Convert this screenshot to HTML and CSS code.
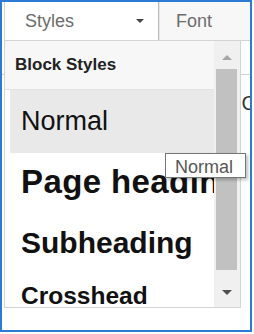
FILE: index.html
```html
<!DOCTYPE html>
<html lang="en">
<head>
  <meta charset="UTF-8">
  <meta name="viewport" content="width=device-width, initial-scale=1.0">
  <title>Styles</title>
  <link rel="stylesheet" href="styles.css">
</head>
<body>
  <div class="frame">
    <div class="toolbar">
      <div class="combo combo-styles">
        <span class="combo-label">Styles</span>
        <span class="combo-arrow"></span>
      </div>
      <div class="combo combo-font">
        <span class="combo-label">Font</span>
      </div>
    </div>
    <div class="toolbar-row"></div>
    <div class="editor">
      <p>iC</p>
    </div>

    <!-- styles dropdown, open over the editor -->
    <div class="styles-panel">
      <div class="panel-body">
        <div class="panel-title">Block Styles</div>
        <ul class="style-list">
          <li class="style-item style-normal">Normal</li>
          <li class="style-item style-h1">Page heading</li>
          <li class="style-item style-h2">Subheading</li>
          <li class="style-item style-h3">Crosshead</li>
        </ul>
      </div>
      <div class="scrollbar">
        <div class="sb-btn"><span class="sb-up"></span></div>
        <div class="sb-thumb"></div>
        <div class="sb-btn sb-btn-down"><span class="sb-down"></span></div>
      </div>
    </div>

    <div class="tooltip">Normal</div>
  </div>
</body>
</html>
```

FILE: styles.css
```css
body {
  margin: 0;
  font-family: "Liberation Sans", Arial, sans-serif;
  background-color: #fff;
}
.frame {
  position: relative;
  width: 252px;
  height: 332px;
  box-sizing: border-box;
  border: 2px solid #2b7bd4;
  overflow: hidden;
  background-color: #fff;
}
.toolbar {
  display: flex;
  margin-left: 2px;
  height: 38px;
  border-bottom: 1px solid #d3d3d3;
}
.combo {
  display: flex;
  align-items: center;
  box-sizing: border-box;
}
.combo-label {
  font-size: 18px;
  line-height: 38px;
  color: #6c6c6c;
}
.combo-styles {
  width: 155px;
  padding-left: 20px;
  border-left: 1px solid #d3d3d3;
  border-right: 1px solid #bdbdbd;
}
.combo-arrow {
  margin-left: auto;
  margin-right: 14px;
  border-left: 4px solid transparent;
  border-right: 4px solid transparent;
  border-top: 4px solid #444;
}
.combo-font {
  flex: 1;
  padding-left: 16px;
  background-color: #f7f7f7;
  border-left: 1px solid #e6e6e6;
}
.toolbar-row {
  height: 33px;
  border-bottom: 1px solid #d3d3d3;
}
.editor p {
  margin: 0 -6px 0 0;
  padding-top: 16px;
  font-size: 20px;
  line-height: 24px;
  text-align: right;
  color: #333;
}
.styles-panel {
  position: absolute;
  left: 2px;
  top: 38px;
  width: 237px;
  height: 268px;
  box-sizing: border-box;
  border: 1px solid #d4d4d4;
  background-color: #fff;
  display: flex;
}
.panel-body {
  width: 209px;
  overflow: hidden;
}
.panel-title {
  height: 48px;
  line-height: 48px;
  padding-left: 10px;
  background-color: #f7f7f7;
  border-bottom: 1px solid #e2e2e2;
  font-size: 17px;
  font-weight: bold;
  color: #222;
}
.style-list {
  list-style: none;
  margin: 0;
  padding: 0 0 0 5px;
}
.style-item {
  padding-left: 11px;
  white-space: nowrap;
  overflow: hidden;
  color: #111;
}
.style-normal {
  font-size: 27px;
  line-height: 63px;
  background-color: #e9e9e9;
}
.style-h1 {
  font-size: 33px;
  font-weight: bold;
  letter-spacing: 0.4px;
  line-height: 57px;
}
.style-h2 {
  font-size: 30px;
  font-weight: bold;
  line-height: 66px;
}
.style-h3 {
  font-size: 24.5px;
  font-weight: bold;
  line-height: 39px;
}
.scrollbar {
  width: 26px;
  flex: none;
  display: flex;
  flex-direction: column;
  padding: 0 3px 0 2px;
  box-sizing: border-box;
  background-color: #f0f0f0;
}
.sb-btn {
  height: 28px;
  padding-top: 14px;
  box-sizing: border-box;
  display: flex;
  justify-content: center;
  align-items: flex-start;
}
.sb-btn-down {
  flex: 1;
  padding-top: 20px;
}
.sb-up {
  border-left: 5px solid transparent;
  border-right: 5px solid transparent;
  border-bottom: 5px solid #a6a6a6;
}
.sb-down {
  border-left: 5px solid transparent;
  border-right: 5px solid transparent;
  border-top: 5px solid #505050;
}
.sb-thumb {
  height: 201px;
  background-color: #c1c1c1;
}
.tooltip {
  position: absolute;
  left: 163px;
  top: 151px;
  width: 81px;
  height: 25px;
  box-sizing: border-box;
  padding: 3px 0 0 9px;
  border: 1px solid #767676;
  background-color: #fff;
  box-shadow: 2px 2px 3px rgba(0, 0, 0, 0.25);
  font-size: 18px;
  line-height: 20px;
  color: #575757;
}
```
